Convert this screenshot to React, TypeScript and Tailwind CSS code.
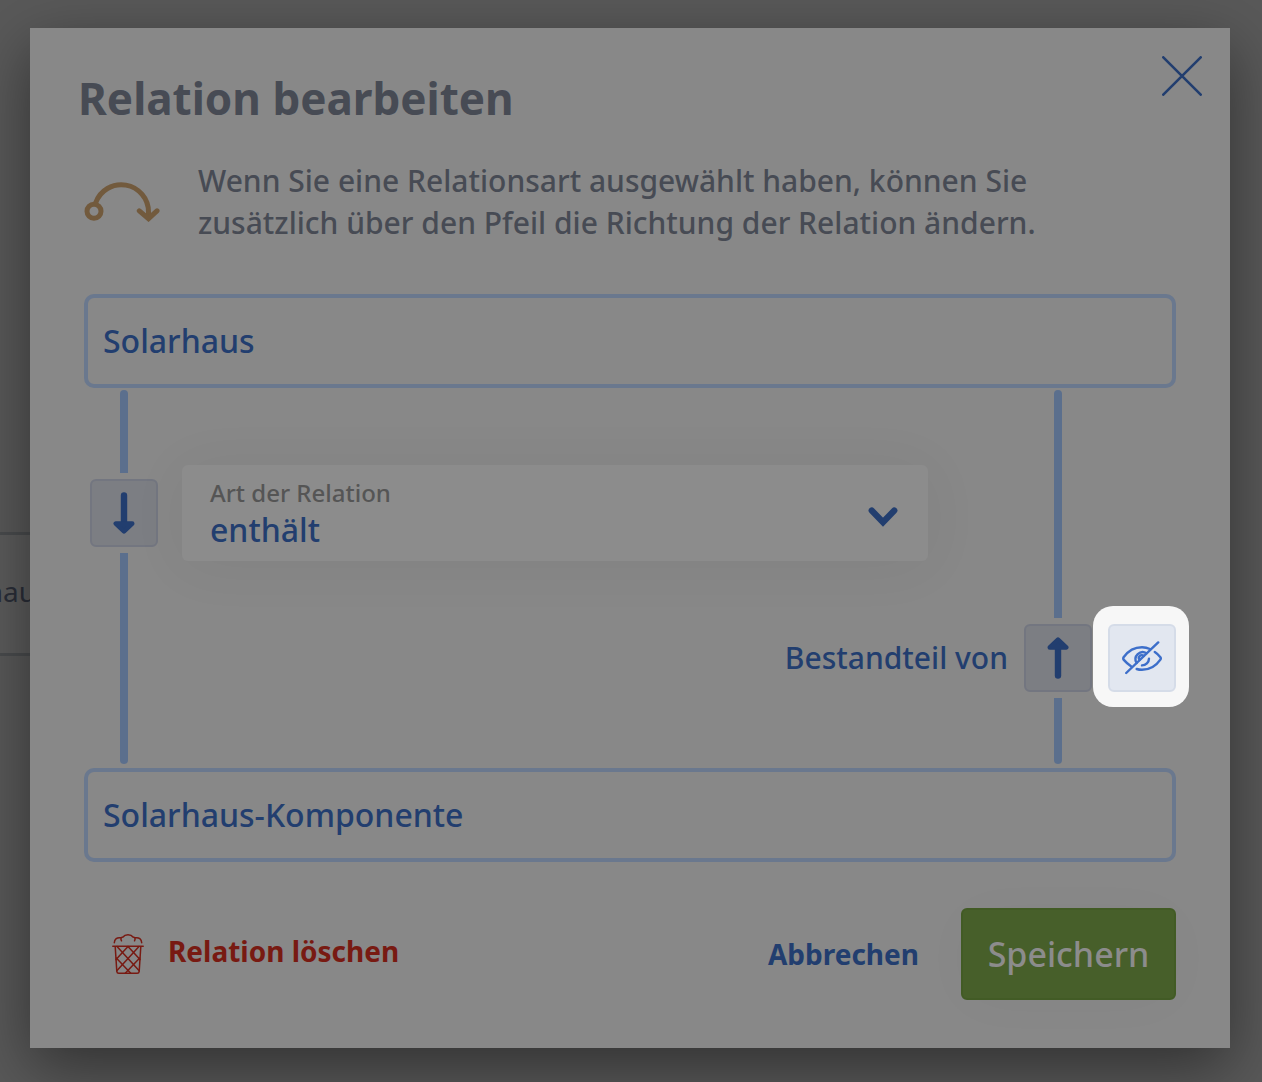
import type { ReactNode } from "react";

function RelationIcon() {
  return (
    <svg
      className="w-[76px] h-[42px] shrink-0 mt-5 text-[#725a3d]"
      viewBox="0 0 76 42"
      fill="none"
      stroke="currentColor"
      strokeWidth="5"
      strokeLinecap="round"
    >
      <circle cx="10" cy="31.3" r="7" />
      <path d="M11.6 23A27.2 27.2 0 0 1 64.5 32V38" />
      <path d="M55.3 30.8 64.5 38.7 73 30.8" />
    </svg>
  );
}

function CloseIcon() {
  return (
    <svg
      className="size-10"
      viewBox="0 0 40 40"
      fill="none"
      stroke="currentColor"
      strokeWidth="2.6"
      strokeLinecap="round"
    >
      <path d="M1.3 1.3 38.7 38.7M38.7 1.3 1.3 38.7" />
    </svg>
  );
}

function ArrowIcon({ up = false }: { up?: boolean }) {
  return (
    <svg
      className={up ? "w-[22px] h-[42px] rotate-180" : "w-[22px] h-[42px]"}
      viewBox="0 0 22 42"
      fill="currentColor"
      stroke="currentColor"
      strokeLinecap="round"
      strokeLinejoin="round"
    >
      <path d="M11 3.4V30" strokeWidth="6.4" />
      <path d="M2.8 31.6H19.2L11 39.4Z" strokeWidth="4.6" />
    </svg>
  );
}

function ChevronIcon() {
  return (
    <svg
      className="w-[30px] h-5"
      viewBox="0 0 30 20"
      fill="none"
      stroke="currentColor"
      strokeWidth="6.4"
      strokeLinecap="round"
    >
      <path d="M3.8 3.6 15 15.2 26.2 3.6" />
    </svg>
  );
}

function EyeOffIcon() {
  return (
    <svg
      className="w-10 h-[34px]"
      viewBox="0 0 40 34"
      fill="none"
      stroke="currentColor"
      strokeWidth="2.4"
      strokeLinecap="round"
      strokeLinejoin="round"
    >
      <path d="M36.2 1.4 4.2 32" />
      <path d="M28 8C25.6 6.9 23 6.3 20 6.3 12.5 6.3 6 10.2 1.6 16.2Q.9 17.4 1.6 18.6C3.8 21.2 6.2 23.4 9.3 25.4" />
      <path d="M32.8 11C35 12.4 36.8 14.200 38.400 16.200Q39.200 17.400 38.400 18.600C34.500 24.200 28 28.800 20 28.800 18.200 28.800 16.400 28.600 14.700 28" />
      <path d="M24.600 12.200A7.200 7.200 0 0 0 14.600 22" />
      <path d="M27 17.600A7 7 0 0 1 20 24.400" />
      <path d="M21.800 15A2.800 2.800 0 0 0 17.700 18.900" />
    </svg>
  );
}

function TrashIcon() {
  return (
    <svg
      className="w-8 h-10"
      viewBox="0 0 32 40"
      fill="none"
      stroke="currentColor"
      strokeWidth="1.500"
      strokeLinecap="round"
      strokeLinejoin="round"
    >
      <path d="M2.300 8.800C2.500 5 5 3.200 8.600 3.800M9.500 6.800C8.300 4.800 9 3.300 11 3 13 0 19 0 21 3 23 3.300 23.700 4.800 22.500 6.800M23.400 3.800C27 3.200 29.500 5 29.700 8.800" />
      <path d="M.8 12.200H31.200M3.200 12.500 4.800 37.300Q5 39.200 6.800 39.200H25.200Q27 39.200 27.200 37.300L28.800 12.500" />
      <path d="M5 12.500 27.200 36.700M4.300 24 18.500 39M16 12.500 28 25.500" />
      <path d="M27 12.500 4.800 36.700M27.700 24 13.500 39M16 12.500 4 25.500" />
    </svg>
  );
}

interface RailProps {
  top: string;
  bottom: string;
  children: ReactNode;
}

// vertical connector with a direction button sitting on it
function Rail({ top, bottom, children }: RailProps) {
  return (
    <div className="w-[68px] shrink-0 flex flex-col items-center gap-1.5">
      <div className={`w-2 rounded-t-full bg-[#5b6f8d] ${top}`}></div>
      {children}
      <div className={`w-2 rounded-b-full bg-[#5b6f8d] ${bottom}`}></div>
    </div>
  );
}

function DirectionButton({ up = false }: { up?: boolean }) {
  return (
    <button
      type="button"
      aria-label="Richtung ändern"
      className="size-[68px] flex items-center justify-center rounded-md border-2 border-[#737680] bg-[#7c7e83]"
    >
      <ArrowIcon up={up} />
    </button>
  );
}

function ConceptField({ label, value }: { label: string; value: string }) {
  return (
    <input
      type="text"
      aria-label={label}
      defaultValue={value}
      className="block w-full h-[94px] px-[15px] pb-0.5 rounded-[10px] border-4 border-[#6a788e] bg-transparent text-[32px] font-medium outline-none"
    />
  );
}

export default function App() {
  return (
    <div className="relative min-h-screen overflow-hidden bg-[#595959] pl-[30px] pr-8 pt-7 pb-8 font-['Noto_Sans',sans-serif] text-[#223e6f]">
      {/* Concept map node behind the dialog */}
      <div className="absolute -left-28 top-[532px] w-60 h-[124px] flex items-center pl-7 pb-1.5 border-[3px] border-[#4a4c4e] bg-[#5c5c5c] text-[28px] text-[#2a2e38]">
        Solarhaus
      </div>

      <div
        role="dialog"
        aria-labelledby="dialog-title"
        className="relative bg-[#888888] pb-12 shadow-[0_20px_60px_rgba(0,0,0,0.45)]"
      >
        <header className="flex items-start justify-between pt-7 pl-12 pr-7">
          <h1
            id="dialog-title"
            className="mt-3 text-[44px] leading-[60px] font-bold text-[#474b54]"
          >
            Relation bearbeiten
          </h1>
          <button type="button" aria-label="Schließen">
            <CloseIcon />
          </button>
        </header>

        <form className="px-[54px]">
          <div className="flex gap-[38px] mt-8">
            <RelationIcon />
            <p className="max-w-[860px] text-[30px] leading-[42px] font-medium text-[#474b54]">
              Wenn Sie eine Relationsart ausgewählt haben, können Sie zusätzlich
              über den Pfeil die Richtung der Relation ändern.
            </p>
          </div>

          <div className="mt-[50px]">
            <ConceptField label="Startkonzept" value="Solarhaus" />

            <div className="flex pt-0.5 pb-1 pl-1.5">
              <Rail top="h-[83px]" bottom="h-[211px]">
                <DirectionButton />
              </Rail>

              <div className="flex-1 pl-6 pr-4">
                <div className="relative mt-[75px] mr-20 pt-3 pb-[11px] px-7 rounded-md bg-[#8c8c8c] shadow-[0_4px_60px_rgba(0,0,0,0.05)]">
                  <label
                    htmlFor="relation-type"
                    className="block mb-px text-2xl leading-8 font-medium text-[#555555]"
                  >
                    Art der Relation
                  </label>
                  <select
                    id="relation-type"
                    className="block w-full h-10 appearance-none bg-transparent text-[32px] leading-10 font-medium outline-none"
                  >
                    <option>enthält</option>
                  </select>
                  <div className="absolute right-[30px] top-[42px] pointer-events-none">
                    <ChevronIcon />
                  </div>
                </div>
                <p className="mt-[63px] text-right text-[30px] leading-[68px] font-medium">
                  Bestandteil von
                </p>
              </div>

              <Rail top="h-[228px]" bottom="h-[66px]">
                <DirectionButton up />
              </Rail>

              <div className="relative size-[68px] mt-[234px] ml-4">
                {/* Spotlight */}
                <div className="absolute -left-[15px] -right-[13px] -top-[18px] -bottom-[15px] rounded-[20px] bg-[#f7f7f7]"></div>
                <button
                  type="button"
                  aria-label="Relation ausblenden"
                  className="relative size-[68px] flex items-center justify-center rounded-md border-2 border-[#d5dce8] bg-[#e2e7f0] text-[#3d6fca]"
                >
                  <EyeOffIcon />
                </button>
              </div>
            </div>

            <ConceptField label="Zielkonzept" value="Solarhaus-Komponente" />
          </div>

          <footer className="flex items-center mt-[46px]">
            <button
              type="button"
              className="flex items-start gap-6 ml-7 text-[28px] leading-[34px] font-bold text-[#781a12]"
            >
              <TrashIcon />
              Relation löschen
            </button>
            <button
              type="button"
              className="ml-auto mr-[42px] text-[28px] leading-[34px] font-bold"
            >
              Abbrechen
            </button>
            <button
              type="submit"
              className="min-w-[215px] h-[92px] px-6 rounded-md border-2 border-[#425b25] bg-[#475f2a] text-[34px] font-medium text-[#8c8c8c] shadow-[0_4px_60px_rgba(0,0,0,0.02)]"
            >
              Speichern
            </button>
          </footer>
        </form>
      </div>
    </div>
  );
}
